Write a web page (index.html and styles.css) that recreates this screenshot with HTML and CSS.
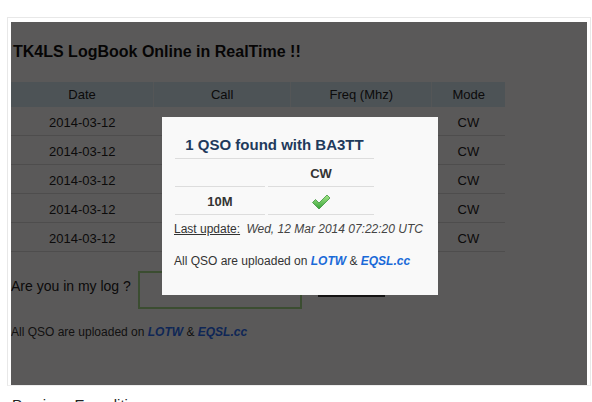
FILE: index.html
```html
<!DOCTYPE html>
<html lang="en">
<head>
    <meta charset="UTF-8">
    <title>TK4LS LogBook Online</title>
    <link rel="stylesheet" href="styles.css">
</head>
<body>
    <div class="frame">
        <div class="viewport">
            <div class="page">
                <h1>TK4LS LogBook Online in RealTime !!</h1>
                <table class="log">
                    <thead>
                        <tr><th class="c-date">Date</th><th class="c-call">Call</th><th class="c-freq">Freq (Mhz)</th><th class="c-mode">Mode</th></tr>
                    </thead>
                    <tbody>
                        <tr><td>2014-03-12</td><td></td><td></td><td>CW</td></tr>
                        <tr><td>2014-03-12</td><td></td><td></td><td>CW</td></tr>
                        <tr><td>2014-03-12</td><td></td><td></td><td>CW</td></tr>
                        <tr><td>2014-03-12</td><td></td><td></td><td>CW</td></tr>
                        <tr><td>2014-03-12</td><td></td><td></td><td>CW</td></tr>
                    </tbody>
                </table>
                <form class="search">
                    <label>Are you in my log ?</label>
                    <input type="text" class="search-input">
                    <button type="button" class="search-button"></button>
                </form>
                <p class="note">All QSO are uploaded on <a href="#">LOTW</a> &amp; <a href="#">EQSL.cc</a></p>
            </div>

            <!-- result popup over the dimmed page -->
            <div class="backdrop"></div>
            <div class="modal">
                <table class="result">
                    <tr><th colspan="2" class="result-title">1 QSO found with BA3TT</th></tr>
                    <tr><td class="r-band"></td><td class="r-mode">CW</td></tr>
                    <tr>
                        <td class="r-band">10M</td>
                        <td class="r-mode">
                            <svg class="check" width="20" height="16" viewBox="0 0 20 16">
                                <defs>
                                    <linearGradient id="g" x1="0" y1="0" x2="0" y2="1">
                                        <stop offset="0" stop-color="#a6e88a"/>
                                        <stop offset="1" stop-color="#36a238"/>
                                    </linearGradient>
                                </defs>
                                <path d="M1.5 8.5 L4.5 5.5 L8 9 L16 1 L19 4 L8 15 Z" fill="url(#g)" stroke="#2e8a2e" stroke-width="0.7" stroke-linejoin="round"/>
                            </svg>
                        </td>
                    </tr>
                </table>
                <p class="updated"><span class="updated-label">Last update:</span> <em>Wed, 12 Mar 2014 07:22:20 UTC</em></p>
                <p class="note">All QSO are uploaded on <a href="#">LOTW</a> &amp; <a href="#">EQSL.cc</a></p>
            </div>
        </div>
    </div>
    <p class="below">Previous Expeditions</p>
</body>
</html>
```

FILE: styles.css
```css
body {
    margin: 0;
    padding: 17px 0 0 7px;
    font-family: "Liberation Sans", Arial, sans-serif;
    background-color: #fff;
    color: #222;
}

.frame {
    width: 579px;
    border: 1px solid #e8e8e8;
    border-bottom-color: #eee;
    padding: 4px 0 0 3px;
}

.viewport {
    position: relative;
    width: 576px;
    height: 363px;
    overflow: hidden;
    background-color: #fff;
}

h1 {
    margin: 0;
    padding: 21px 2px 0;
    font-size: 16px;
    line-height: 18px;
    color: #111;
}

/* main log table */
.log {
    margin-top: 21px;
    width: 494px;
    border-collapse: collapse;
    font-size: 13px;
}

.log th {
    height: 25px;
    padding: 0;
    font-weight: normal;
    background-color: #d9edf7;
    border-right: 1px solid #eef6fa;
}

.log th:last-child {
    border-right: none;
}

.log .c-date { width: 143px; }
.log .c-call { width: 137px; }
.log .c-freq { width: 141px; }
.log .c-mode { width: 73px; }

.log td {
    height: 26px;
    padding: 2px 0 0;
    text-align: center;
    border-bottom: 1px solid #ddd;
}

.search {
    display: flex;
    align-items: center;
    margin: 19px 0 0;
}

.search label {
    font-size: 14px;
    margin-right: 7px;
    padding-bottom: 8px;
}

.search-input {
    box-sizing: border-box;
    width: 164px;
    height: 38px;
    border: 2px solid #a6dc8c;
    margin: 0;
}

.search-button {
    align-self: flex-start;
    margin-left: 16px;
    width: 67px;
    height: 26px;
    border: none;
    background-color: #3a3a3a;
}

.note {
    margin: 16px 0 0;
    font-size: 12px;
    color: #333;
}

.note a {
    font-weight: bold;
    font-style: italic;
    text-decoration: none;
    color: #1a6ad8;
}

.page .note a {
    color: #2a6ef5;
}

.backdrop {
    position: absolute;
    left: 0;
    top: 0;
    right: 0;
    bottom: 0;
    background-color: rgba(2, 0, 0, 0.65);
}

/* popup */
.modal {
    position: absolute;
    left: 151px;
    top: 95px;
    width: 276px;
    height: 178px;
    box-sizing: border-box;
    padding: 14px 0 0 10px;
    background-color: #f9f9f9;
}

.result {
    border-collapse: separate;
    border-spacing: 3px 0;
}

.result-title {
    padding: 5px 0;
    font-size: 15px;
    line-height: 17px;
    color: #1f3a5c;
    border-bottom: 1px solid #ddd;
}

.result td {
    height: 25px;
    padding: 2px 0 0;
    text-align: center;
    vertical-align: middle;
    font-size: 13px;
    font-weight: bold;
    color: #333;
    border-bottom: 1px solid #ddd;
}

.result .r-band { width: 90px; }
.result .r-mode { width: 106px; }

.check {
    display: block;
    margin: 0 auto;
}

.updated {
    margin: 7px 0 0 2px;
    font-size: 12px;
    line-height: 14px;
    color: #333;
}

.updated-label {
    text-decoration: underline;
}

.updated em {
    margin-left: 3px;
    color: #444;
}

.modal .note {
    margin: 18px 0 0 2px;
    line-height: 14px;
}

.below {
    margin: 10px 0 0 5px;
    font-size: 15px;
    color: #222;
}
```
